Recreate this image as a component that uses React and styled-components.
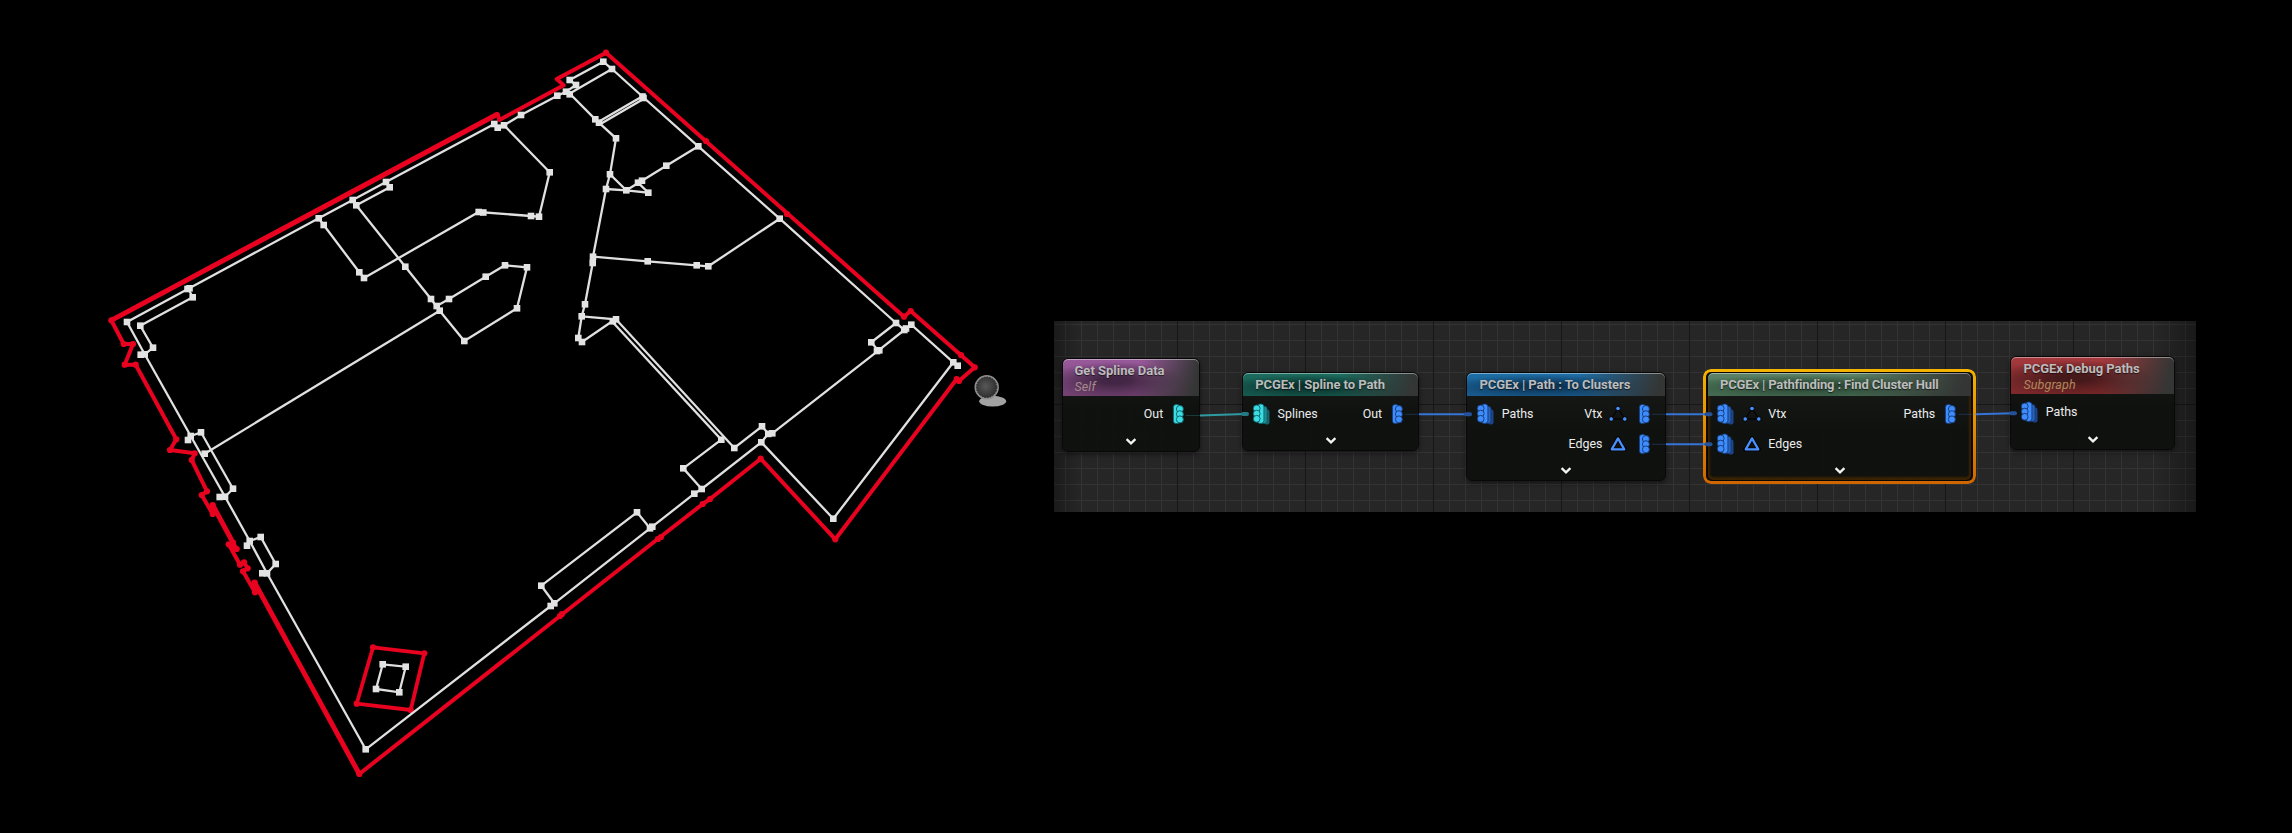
import React from "react";
import styled, { createGlobalStyle, css } from "styled-components";

const GlobalStyle = createGlobalStyle`
  * { box-sizing: border-box; }
  body { margin: 0; background: #000; font-family: Roboto, "Liberation Sans", sans-serif; }
`;

const Page = styled.main`
  display: flex;
  align-items: center;
  width: 2292px;
  height: 833px;
  background: #000;
  overflow: hidden;
`;

const Viewport = styled.section`
  flex: 0 0 1054px;
  height: 833px;
`;

const Drawing = styled.svg`
  display: block;
`;

const Graph = styled.section`
  position: relative;
  flex: 0 0 1142px;
  height: 191px;
  background:
    linear-gradient(#171717, #171717) 0 83px / 100% 1px no-repeat,
    repeating-linear-gradient(90deg, transparent 0 123px, #171717 123px 124px, transparent 124px 128px),
    repeating-linear-gradient(90deg, transparent 0 11px, #333 11px 12px, transparent 12px 16px),
    repeating-linear-gradient(180deg, transparent 0 3px, #333 3px 4px, transparent 4px 16px),
    #262626;
  &::after {
    content: "";
    position: absolute;
    inset: 0;
    pointer-events: none;
    background: linear-gradient(90deg, rgba(0,0,0,.3), transparent 26px calc(100% - 40px), rgba(0,0,0,.35));
  }
`;

const Wires = styled.svg`
  position: absolute;
  inset: 0;
  z-index: 2;
`;

const NodeCard = styled.article`
  position: absolute;
  z-index: 1;
  left: ${(p) => p.$x}px;
  top: ${(p) => p.$y}px;
  width: ${(p) => p.$w}px;
  height: ${(p) => p.$h}px;
  display: flex;
  flex-direction: column;
  border: 1px solid #080808;
  border-radius: 6px;
  background: linear-gradient(180deg, rgba(24, 26, 24, 0.95), rgba(14, 16, 14, 0.95) 55%);
  box-shadow: 0 2px 5px rgba(0, 0, 0, 0.5);
  ${(p) =>
    p.$selected &&
    css`
      &::before {
        content: "";
        position: absolute;
        inset: -4px -5px;
        border-radius: 8px;
        padding: 3px;
        background: linear-gradient(#f5b400, #cf6500);
        mask: linear-gradient(#000 0 0) content-box exclude, linear-gradient(#000 0 0);
      }
      box-shadow: 0 0 0 2px #0b0905, inset 0 -3px 2px #3a2204, inset -2px 0 2px #3a2204, inset 2px 0 2px #3a2204;
    `}
`;

const Header = styled.header`
  flex: 0 0 ${(p) => p.$h}px;
  padding: 4px 12px 0;
  border-radius: 5px 5px 0 0;
  box-shadow: inset 0 1px 0.5px rgba(255, 255, 255, 0.42);
  background:
    linear-gradient(100deg, transparent 55%, #343635 96%),
    radial-gradient(ellipse 50% 50% at 38% 58%, ${(p) => p.$dark} 20%, transparent 100%),
    linear-gradient(180deg, ${(p) => p.$top}, ${(p) => p.$bottom});
`;

const Title = styled.h2`
  margin: 0;
  font-size: 13px;
  font-weight: 700;
  line-height: 15px;
  letter-spacing: ${(p) => p.$tracking ?? -0.06}px;
  color: #bcbcbc;
  white-space: nowrap;
  text-shadow: 0 1px 1px rgba(0, 0, 0, 0.6);
`;

const Subtitle = styled.p`
  margin: 1px 0 0;
  font-size: 12.5px;
  font-style: italic;
  line-height: 15px;
  letter-spacing: 0.12px;
  color: ${(p) => p.$color};
`;

const PinArea = styled.div`
  display: flex;
  justify-content: space-between;
  padding: 3px 15px 0 9.3px;
`;

const PinColumn = styled.div`
  display: flex;
  flex-direction: column;
  align-items: ${(p) => (p.$end ? "flex-end" : "flex-start")};
`;

const PinRow = styled.div`
  display: flex;
  align-items: center;
  height: 30px;
  gap: 7px;
`;

const PinSlot = styled.span`
  display: flex;
  margin: 0 ${(p) => p.$after || 0}px 0 ${(p) => p.$before || 0}px;
`;

const PinLabel = styled.span`
  font-size: 12.4px;
  line-height: 16px;
  color: #ececec;
`;

const Expander = styled.div`
  display: flex;
  justify-content: center;
  margin-top: auto;
  padding-bottom: 6px;
`;

const Icon = styled.svg`
  display: block;
  overflow: visible;
`;

const COLORS = {
  cyan: { main: "#3bdde4", edge: "#0d5b62", mid: "#1f8f97", far: "#17636a" },
  blue: { main: "#3f8cff", edge: "#12386f", mid: "#2860bb", far: "#1c4687" },
};

function InputPin({ tone }) {
  const c = COLORS[tone];
  return (
    <Icon width="17" height="22" viewBox="0 0 17 22">
      <rect x="11" y="6.5" width="5.5" height="15" rx="2.2" fill={c.far} />
      <rect x="8.5" y="3.5" width="5.5" height="17" rx="2.2" fill={c.mid} stroke={c.edge} strokeWidth=".8" />
      <rect x="4.3" y="1" width="6.6" height="19.4" rx="2.8" fill={c.main} stroke={c.edge} strokeWidth=".8" />
      {[5.4, 10.6, 15.8].map((y) => (
        <circle key={y} cx="3.7" cy={y} r="3.4" fill={c.main} stroke={c.edge} strokeWidth=".9" />
      ))}
    </Icon>
  );
}

function OutputPin({ tone }) {
  const c = COLORS[tone];
  return (
    <Icon width="11" height="20" viewBox="0 0 11 20">
      <rect x=".4" y=".4" width="6.4" height="19.2" rx="2.8" fill={c.main} stroke={c.edge} strokeWidth=".8" />
      {[5, 10.2, 15.4].map((y) => (
        <circle key={y} cx="6.9" cy={y} r="3.5" fill={c.main} stroke={c.edge} strokeWidth=".9" />
      ))}
    </Icon>
  );
}

function VtxIcon() {
  return (
    <Icon width="18" height="16" viewBox="0 0 18 16">
      <path d="M9 2.5 2.2 13H15.8Z" fill="none" stroke="#050505" strokeWidth="1.3" />
      {[[9, 2.5], [2.2, 13], [15.8, 13]].map(([x, y]) => (
        <circle key={x} cx={x} cy={y} r="2.3" fill="#4a90ff" stroke="#050505" strokeWidth="1" />
      ))}
    </Icon>
  );
}

function EdgesIcon() {
  return (
    <Icon width="18" height="16" viewBox="0 0 18 16">
      {[[9, 2.5], [2.2, 13], [15.8, 13]].map(([x, y]) => (
        <circle key={x} cx={x} cy={y} r="2.3" fill="#050505" />
      ))}
      <path d="M9 2.4 2.7 13.4H15.3Z" fill="none" stroke="#050505" strokeWidth="3.8" strokeLinejoin="round" />
      <path d="M9 2.4 2.7 13.4H15.3Z" fill="none" stroke="#4a90ff" strokeWidth="2.2" strokeLinejoin="round" />
    </Icon>
  );
}

const GLYPHS = { vtx: VtxIcon, edges: EdgesIcon };

function Pin({ label, tone, glyph, out }) {
  const Glyph = glyph && GLYPHS[glyph];
  if (out) {
    return (
      <PinRow>
        <PinLabel>{label}</PinLabel>
        {Glyph ? <Glyph /> : null}
        <PinSlot $before={Glyph ? 4.6 : 2.8}>
          <OutputPin tone={tone} />
        </PinSlot>
      </PinRow>
    );
  }
  return (
    <PinRow>
      <PinSlot $after={Glyph ? 2 : 1}>
        <InputPin tone={tone} />
      </PinSlot>
      {Glyph ? <Glyph /> : null}
      <PinLabel>{label}</PinLabel>
    </PinRow>
  );
}

function GraphNode({ node }) {
  return (
    <NodeCard $x={node.x} $y={node.y} $w={node.w} $h={node.h} $selected={node.selected}>
      <Header $h={node.header} $top={node.top} $bottom={node.bottom} $dark={node.dark}>
        <Title $tracking={node.tracking}>{node.title}</Title>
        {node.subtitle && <Subtitle $color={node.subColor}>{node.subtitle}</Subtitle>}
      </Header>
      <PinArea>
        <PinColumn>{node.ins.map((p) => <Pin key={p.label} {...p} />)}</PinColumn>
        <PinColumn $end>{node.outs.map((p) => <Pin key={p.label} out {...p} />)}</PinColumn>
      </PinArea>
      <Expander>
        <Icon width="10" height="7" viewBox="0 0 10 7">
          <path d="M.6 1.1 5 5.3 9.4 1.1" fill="none" stroke="#f4f4f4" strokeWidth="2.3" />
        </Icon>
      </Expander>
    </NodeCard>
  );
}

const NODES = [
  {
    title: "Get Spline Data", subtitle: "Self", subColor: "#a58a8a", tracking: 0,
    x: 7.5, y: 37.4, w: 138.5, h: 93.6, header: 37, top: "#9a5a9c", bottom: "#70406f", dark: "#432645",
    ins: [], outs: [{ label: "Out", tone: "cyan" }],
  },
  {
    title: "PCGEx | Spline to Path",
    x: 188.3, y: 51.3, w: 176.7, h: 78.7, header: 23, top: "#1d6d60", bottom: "#14574c", dark: "#0b332d",
    ins: [{ label: "Splines", tone: "cyan" }], outs: [{ label: "Out", tone: "blue" }],
  },
  {
    title: "PCGEx | Path : To Clusters",
    x: 412.4, y: 51.3, w: 199.6, h: 108.7, header: 23, top: "#1e6fa8", bottom: "#16598c", dark: "#0d3454",
    ins: [{ label: "Paths", tone: "blue" }],
    outs: [{ label: "Vtx", tone: "blue", glyph: "vtx" }, { label: "Edges", tone: "blue", glyph: "edges" }],
  },
  {
    title: "PCGEx | Pathfinding : Find Cluster Hull", selected: true, tracking: -0.15,
    x: 653, y: 51.3, w: 265, h: 108.7, header: 23, top: "#5d8468", bottom: "#42684f", dark: "#294634",
    ins: [{ label: "Vtx", tone: "blue", glyph: "vtx" }, { label: "Edges", tone: "blue", glyph: "edges" }],
    outs: [{ label: "Paths", tone: "blue" }],
  },
  {
    title: "PCGEx Debug Paths", subtitle: "Subgraph", subColor: "#b0885c",
    x: 956.4, y: 35.4, w: 164.4, h: 93.4, header: 37, top: "#a63a3e", bottom: "#7c2729", dark: "#46191b",
    ins: [{ label: "Paths", tone: "blue" }], outs: [],
  },
];

const WIRES = [
  { from: [132, 94.5], to: [191, 93], solid: 146, tone: "#2f9aa2", end: "#237b82" },
  { from: [351, 93.3], to: [414, 93.3], solid: 365, tone: "#3674d8", end: "#23529b" },
  { from: [598, 93.3], to: [654.5, 93.3], solid: 612, tone: "#3674d8", end: "#23529b" },
  { from: [598, 123.3], to: [654.5, 123.3], solid: 612, tone: "#3674d8", end: "#23529b" },
  { from: [905, 93.3], to: [959, 92.3], solid: 922, tone: "#3674d8", end: "#23529b" },
];

const HULL =
  "M606 52.7 556.7 79 563.7 85.3 499.3 120 497.7 114 111.3 320.3 123.7 344 133 344 124.7 364.7 135.7 364.7 176.3 439.3 170 450 194.7 453.3 191.7 460 207 491.3 201.7 495 212.7 514 212.7 505 233 542.7 236.7 549 228.7 544.3 240 564.7 244 562.3 247.7 568.3 243 571.3 255 592.3 254.7 582.7 359.3 774 560 616 659 538 702.7 504 710 499 760.7 458.7 835.3 539.3 956.7 379 959 381 974.7 367.3 910.7 311 904 316.7Z";

const HULL_HEAVY = "M111.3 320.3 497.7 114M212.7 505 233 542.7M254.7 582.7 359.3 774";

const HULL_POINTS = [
  [606, 52.7], [111.3, 320.3], [123.7, 344], [133, 344], [124.7, 364.7], [135.7, 364.7], [176.3, 439.3],
  [170, 450], [194.7, 453.3], [191.7, 460], [207, 491.3], [201.7, 495], [212.7, 514], [212.7, 505],
  [233, 542.7], [236.7, 549], [228.7, 544.3], [240, 564.7], [244, 562.3], [247.7, 568.3], [243, 571.3],
  [255, 592.3], [254.7, 582.7], [359.3, 774], [560, 616], [562, 614], [658, 539], [661, 537], [702.7, 504],
  [710, 499], [760.7, 458.7], [835.3, 539.3], [956.7, 379], [959, 381], [974.7, 367.3], [961, 355],
  [910.7, 311], [904, 316.7], [787, 214], [706, 141], [373, 647.3], [424.3, 653.3], [410.7, 710], [356.7, 703.7],
];

const EDGES = [
  // outer walls
  "M603.3 61.7 612 69 643 97 698.3 146.3 779.7 218.7 896 323 904.3 330 911.3 324.7 953.3 362.3 957.7 365.7",
  "M953.3 362.3 833.3 518.7 761.3 442.3 701.7 489 694.3 493.7 652.3 526.7 554.3 603.3 550.7 606 365.7 749.3",
  "M365.7 749.3 267 573.3 249.7 541 225 496.7 190.7 436 144.7 354.3 127 322 188.3 288.7 318.7 218.3 352.7 200 386 182 494.3 124",
  "M494.3 124 497.7 127.7 504 125.3 521 115 557.3 95.7 566 91.7 576 85 569.7 80 603.3 61.7",
  // rooms along the upper edge
  "M612 69 569.7 93.5 595.3 119.3 616 138.3 610 174.3 606 189 593 256.7 592.7 263 585 304.3 581.7 316.3 578.3 338 582 342 612.3 321.3",
  "M599 121.5 643 96M600 124.3 643 99.2",
  "M698.3 146.3 666.3 165.7 642 180.7 626.3 190.3 610 174.3M606 189 626.3 190.3 648.3 192.7 638 182.7",
  "M593 256.7 647.7 261.3 696.7 265.3 708.3 266.3 779.7 218.7",
  "M504 125.3 549.7 172.3 539 216.7 531 216 478.7 212 364 278 359.3 272.3 323.7 225 318.7 218.3",
  "M386 182 389.7 187.3 356.3 205.3 352.7 200M356.3 205.3 405.3 266.7 431 299 439.7 310.7 464.3 341 517 308.3 527 267.3 505 265.3 485.7 276.7 449 299 436.7 306",
  "M439.7 310.7 204.7 453.7",
  "M188.3 288.7 192.7 297.3 140.3 325.7 153 347.7 144.7 354.3",
  "M190.7 436 201 432.3 233 488.7 225 496.7M249.7 541 260.7 537 275.7 564 267 573.3",
  // corridor and rooms on the right
  "M581.7 316.3 616 319.3 734.3 448 762 426.3 768.3 433.7 761.3 442.3M612.8 322.3 721.3 439.7 683.3 468.3 701.7 489",
  "M772.3 433.3 878.3 350.7 904.3 330M878.3 350.7 871.3 342.3 896 323",
  "M650 528.3 637 512.3 541.3 585.7 554.3 603.3",
  "M382.7 664.3 405.7 666.7 399.3 692.3 376 689Z",
];

const VERTICES = [
  [603.3, 61.7], [612, 69], [569.7, 80], [576, 85], [566, 91.7], [569.7, 94.3], [557.3, 95.7], [521, 115],
  [504, 125.3], [497.7, 127.7], [494.3, 124], [642.5, 96.5], [643.5, 98], [595.3, 119.3], [599, 122.7],
  [616, 138.3], [698.3, 146.3], [666.3, 165.7], [610, 174.3], [606, 189], [626.3, 190.3], [638, 182.7],
  [642, 180.7], [648.3, 192.7], [779.7, 218.7], [549.7, 172.3], [478.7, 212], [483.3, 212.5], [531, 216],
  [539, 216.7], [593, 256.7], [592.7, 263], [647.7, 261.3], [696.7, 265.3], [708.3, 266.3], [585, 304.3],
  [581.7, 316.3], [578.3, 338], [582, 342], [612.8, 321.3], [616, 319.3], [505, 265.3], [527, 267.3],
  [485.7, 276.7], [517, 308.3], [386, 182], [389.7, 187.3], [352.7, 200], [356.3, 205.3], [318.7, 218.3],
  [323.7, 225], [359.3, 272.3], [364, 278], [405.3, 266.7], [431, 299], [436.7, 306], [439.7, 310.7],
  [449, 299], [464.3, 341], [187.5, 289], [189.5, 288.3], [192.7, 297.3], [127, 322], [140.3, 325.7],
  [153, 347.7], [140.7, 354.7], [144.7, 354.3], [201, 432.3], [190.7, 436], [188, 440], [204.7, 453.7],
  [233, 488.7], [219.7, 497], [225, 496.7], [260.7, 537], [249.7, 541], [247, 545.7], [275.7, 564],
  [262.3, 573.3], [267, 573.3], [365.7, 749.3], [382.7, 664.3], [405.7, 666.7], [399.3, 692.3], [376, 689],
  [896, 323], [904.3, 330], [906, 328.5], [911.3, 324.7], [871.3, 342.3], [877, 351], [879.3, 350.3],
  [953.3, 362.3], [957.7, 365.7], [762, 426.3], [768.3, 433.9], [772.3, 433.3], [761.3, 442.3],
  [734.3, 448], [721.3, 439.7], [683.3, 468.3], [701.7, 489], [694.3, 493.7], [833.3, 518.7],
  [637, 512.3], [650, 528.3], [652.3, 526.7], [541.3, 585.7], [550.7, 606], [554.3, 603.3],
];

function FloorPlan() {
  return (
    <Drawing width="1054" height="833" viewBox="0 0 1054 833">
      <defs>
        <radialGradient id="ball" cx=".45" cy=".45" r=".6">
          <stop offset="0" stopColor="#585858" />
          <stop offset="1" stopColor="#2c2c2c" />
        </radialGradient>
      </defs>
      <g fill="none" stroke="#e90220" strokeLinejoin="round">
        <path d={HULL} strokeWidth="4" />
        <path d={HULL_HEAVY} strokeWidth="4.9" />
        <path d="M373 647.3 424.3 653.3 410.7 710 356.7 703.7Z" strokeWidth="3.8" />
      </g>
      <g fill="#e90220">
        {HULL_POINTS.map(([x, y]) => <circle key={`${x}-${y}`} cx={x} cy={y} r="3.1" />)}
      </g>
      <g fill="none" stroke="#e0e0e0" strokeWidth="2.3">
        {EDGES.map((d) => <path key={d} d={d} />)}
      </g>
      <g fill="#e3e3e3">
        {VERTICES.map(([x, y]) => <rect key={`${x}-${y}`} x={x - 3.3} y={y - 3.3} width="6.6" height="6.6" />)}
      </g>
      <ellipse cx="992.7" cy="401.2" rx="13.5" ry="5.4" fill="#a2a2a2" />
      <circle cx="986.7" cy="387.3" r="12.2" fill="#8e8e8e" />
      <circle cx="986.7" cy="387.3" r="10.2" fill="url(#ball)" stroke="#222" strokeWidth="1" strokeDasharray="1.6 1.2" />
    </Drawing>
  );
}

export default function App() {
  return (
    <>
      <GlobalStyle />
      <Page>
        <Viewport>
          <FloorPlan />
        </Viewport>
        <Graph>
          {NODES.map((n) => <GraphNode key={n.title} node={n} />)}
          <Wires width="1142" height="191" viewBox="0 0 1142 191">
            {WIRES.map((w) => (
              <g key={w.from.join()} fill="none">
                <path d={`M${w.from.join(" ")}H${w.solid}`} stroke={w.tone} strokeWidth="1" opacity=".3" />
                <path d={`M${w.solid} ${w.from[1]} ${w.to.join(" ")}`} stroke={w.tone} strokeWidth="1.9" />
                <path d={`M${w.to[0] - 2} ${w.to[1]}h4`} stroke={w.end} strokeWidth="4" strokeLinecap="round" />
              </g>
            ))}
          </Wires>
        </Graph>
      </Page>
    </>
  );
}
